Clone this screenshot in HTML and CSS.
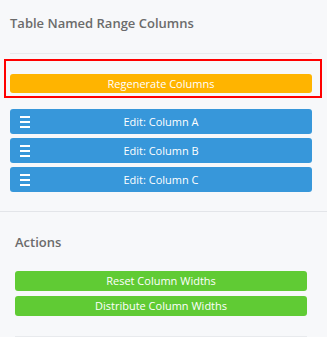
FILE: index.html
```html
<!DOCTYPE html>
<html>
<head>
<meta charset="utf-8">
<link rel="stylesheet" href="styles.css">
</head>
<body>
<div class="section top">
  <div class="title">Table Named Range Columns</div>
  <div class="rule"></div>
  <div class="highlight">
    <div class="btn orange">Regenerate Columns</div>
  </div>
  <div class="list">
    <div class="btn blue"><svg class="menu" width="10" height="12" viewBox="0 0 10 12"><rect x="0" y="0" width="10" height="2"/><rect x="0" y="5" width="10" height="2"/><rect x="0" y="10" width="10" height="2"/></svg>Edit: Column A</div>
    <div class="btn blue"><svg class="menu" width="10" height="12" viewBox="0 0 10 12"><rect x="0" y="0" width="10" height="2"/><rect x="0" y="5" width="10" height="2"/><rect x="0" y="10" width="10" height="2"/></svg>Edit: Column B</div>
    <div class="btn blue"><svg class="menu" width="10" height="12" viewBox="0 0 10 12"><rect x="0" y="0" width="10" height="2"/><rect x="0" y="5" width="10" height="2"/><rect x="0" y="10" width="10" height="2"/></svg>Edit: Column C</div>
  </div>
</div>
<div class="section actions">
  <div class="title">Actions</div>
  <div class="list green-list">
    <div class="btn green">Reset Column Widths</div>
    <div class="btn green">Distribute Column Widths</div>
  </div>
  <div class="rule"></div>
</div>
</body>
</html>
```
FILE: styles.css
```css
html, body {
  margin: 0;
  padding: 0;
  background: #f7f8fa;
  font-family: "Open Sans", "Noto Sans", sans-serif;
}
.section.top {
  padding: 14px 15px 19px 10px;
  border-bottom: 1px solid #e3e5e9;
}
.title {
  font-size: 13px;
  line-height: 18px;
  color: #6b6b6b;
  font-weight: 600;
}
.rule {
  height: 1px;
  background: #e8eaed;
}
.top .rule {
  margin-top: 21px;
}
.highlight {
  margin: 5px -10px 0 -6px;
  border: 2px solid #f00;
  padding: 13px 8px 3px 4px;
}
.btn {
  position: relative;
  color: #fff;
  font-size: 11px;
  font-weight: 500;
  text-align: center;
  border-radius: 3px;
}
.orange {
  background: #ffb400;
  height: 19px;
  line-height: 19px;
}
.list {
  display: flex;
  flex-direction: column;
  gap: 4px;
  margin-top: 11px;
}
.blue {
  background: #3797da;
  height: 25px;
  line-height: 25px;
}
.menu {
  position: absolute;
  left: 10px;
  top: 7px;
  fill: #fff;
}
.section.actions {
  padding: 21px 20px 0 15px;
}
.green-list {
  margin-top: 20px;
  gap: 5px;
}
.green {
  background: #60cb34;
  height: 20px;
  line-height: 20px;
}
.actions .rule {
  margin-top: 20px;
}
```
